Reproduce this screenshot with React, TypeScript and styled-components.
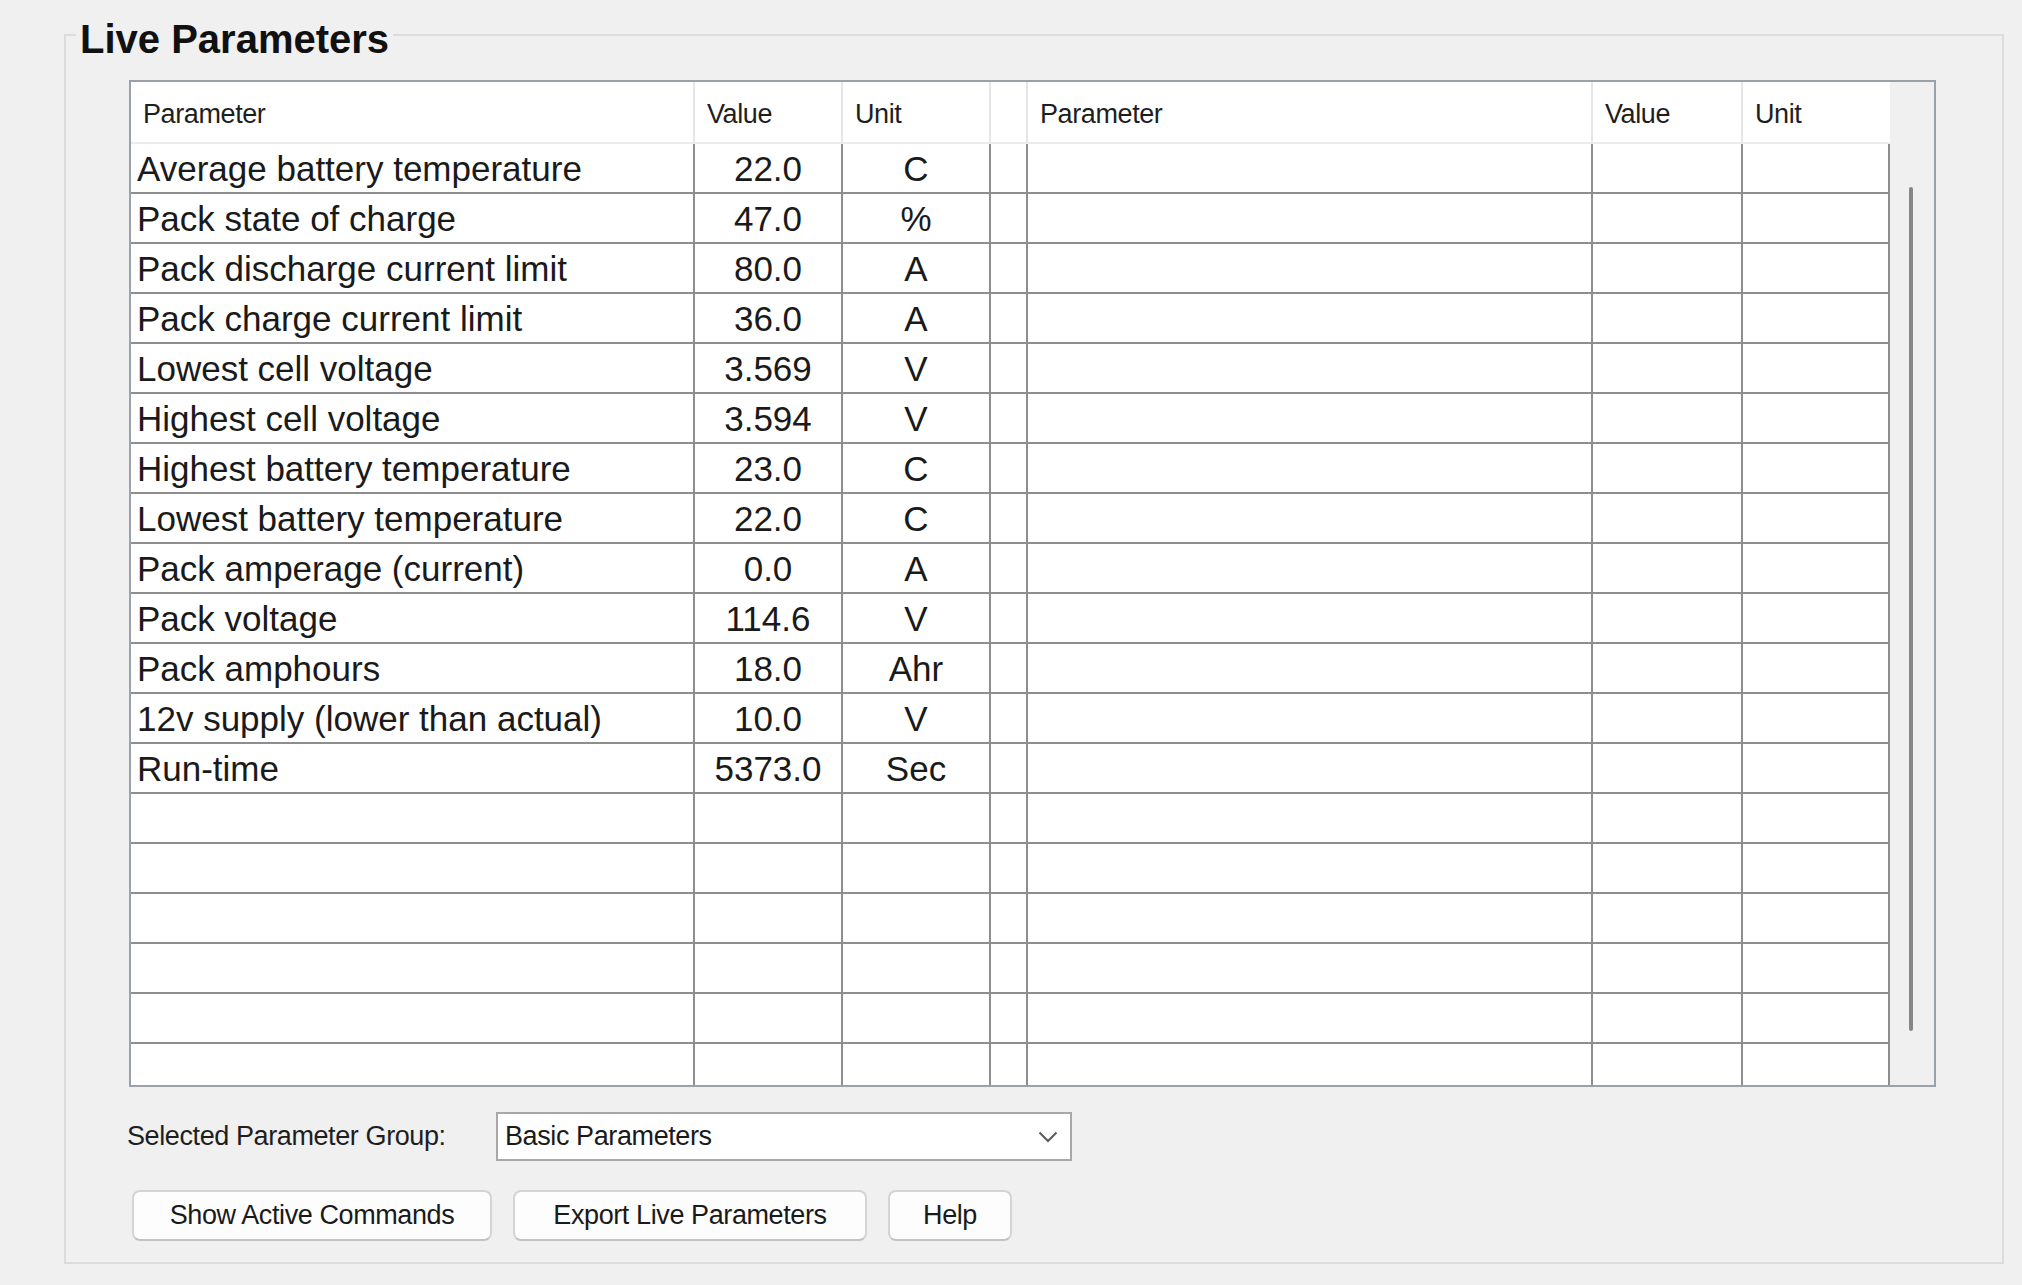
import React from "react";
import styled, { createGlobalStyle } from "styled-components";

const GlobalStyle = createGlobalStyle`
  html, body {
    margin: 0;
    padding: 0;
    background: #f0f0f0;
  }
  body {
    font-family: "Liberation Sans", Arial, sans-serif;
    color: #1a1a1a;
  }
  * { box-sizing: border-box; }
`;

const COLS = "564px 148px 148px 37px 565px 150px 147px";

const Page = styled.div`
  width: 2022px;
  height: 1285px;
  padding: 11px 18px 0 64px;
  background: #f0f0f0;
`;

const GroupBox = styled.fieldset`
  margin: 0;
  padding: 0;
  min-width: 0;
  border: 2px solid #dcdcdc;
`;

const Legend = styled.legend`
  margin-left: 10px;
  padding: 8px 4px 0;
  font-family: "Liberation Sans", Arial, sans-serif;
  font-weight: 700;
  font-size: 40px;
  line-height: 40px;
  color: #111;
`;

const Content = styled.div`
  padding: 21px 66px 21px 63px;
  display: flex;
  flex-direction: column;
`;

const ScrollPane = styled.div`
  display: flex;
  height: 1007px;
  border: 2px solid #9aa1ad;
  background: #f0f0f0;
`;

const TableArea = styled.div`
  width: 1759px;
  flex: none;
  display: flex;
  flex-direction: column;
  background: #fff;
`;

const HeaderRow = styled.div`
  display: grid;
  grid-template-columns: ${COLS};
  height: 62px;
  border-bottom: 2px solid #ececec;
  background: #fff;
`;

const HeaderCell = styled.div<{ $last?: boolean }>`
  display: flex;
  align-items: center;
  padding-left: 12px;
  padding-top: 4px;
  font-size: 27px;
  letter-spacing: -0.4px;
  color: #1e1e1e;
  border-right: ${(p) => (p.$last ? "none" : "2px solid #e6e6e6")};
  white-space: nowrap;
`;

const Body = styled.div`
  height: 941px;
  overflow: hidden;
`;

const Row = styled.div`
  display: grid;
  grid-template-columns: ${COLS};
  height: 50px;
`;

const Cell = styled.div<{ $align: "left" | "center" }>`
  display: flex;
  align-items: center;
  justify-content: ${(p) => (p.$align === "left" ? "flex-start" : "center")};
  padding-left: ${(p) => (p.$align === "left" ? "6px" : "0")};
  padding-top: 2px;
  font-size: 35px;
  color: #1a1a1a;
  white-space: nowrap;
  overflow: hidden;
  border-right: 2px solid #8e8e8e;
  border-bottom: 2px solid #8e8e8e;
`;

const ScrollStrip = styled.div`
  flex: 1;
  display: flex;
  justify-content: center;
  padding-top: 105px;
  padding-right: 2px;
  background: #f0f0f0;
`;

const Thumb = styled.div`
  width: 4px;
  height: 844px;
  border-radius: 2px;
  background: #878787;
`;

const ControlRow = styled.div`
  margin-top: 25px;
  display: flex;
  align-items: center;
`;

const Label = styled.div`
  width: 369px;
  margin-left: -2px;
  font-size: 27px;
  letter-spacing: -0.4px;
  color: #1e1e1e;
  white-space: nowrap;
`;

const Combo = styled.div`
  width: 576px;
  height: 49px;
  display: flex;
  align-items: center;
  justify-content: space-between;
  padding: 0 12px 0 7px;
  background: #fff;
  border: 2px solid #a8a8a8;
  font-size: 27px;
  letter-spacing: -0.4px;
  color: #1a1a1a;
`;

const ButtonRow = styled.div`
  margin-top: 29px;
  padding-left: 3px;
  display: flex;
  gap: 21px;
`;

const Button = styled.button<{ $w: number }>`
  width: ${(p) => p.$w}px;
  height: 51px;
  padding: 0;
  background: #fdfdfd;
  border: 2px solid #d4d4d4;
  border-bottom-color: #c2c2c2;
  border-radius: 8px;
  font-family: "Liberation Sans", Arial, sans-serif;
  font-size: 27px;
  letter-spacing: -0.4px;
  color: #1a1a1a;
  cursor: default;
`;

const rows: [string, string, string][] = [
  ["Average battery temperature", "22.0", "C"],
  ["Pack state of charge", "47.0", "%"],
  ["Pack discharge current limit", "80.0", "A"],
  ["Pack charge current limit", "36.0", "A"],
  ["Lowest cell voltage", "3.569", "V"],
  ["Highest cell voltage", "3.594", "V"],
  ["Highest battery temperature", "23.0", "C"],
  ["Lowest battery temperature", "22.0", "C"],
  ["Pack amperage (current)", "0.0", "A"],
  ["Pack voltage", "114.6", "V"],
  ["Pack amphours", "18.0", "Ahr"],
  ["12v supply (lower than actual)", "10.0", "V"],
  ["Run-time", "5373.0", "Sec"],
];

const TOTAL_ROWS = 20;

const headers = ["Parameter", "Value", "Unit", "", "Parameter", "Value", "Unit"];

export default function App() {
  const allRows = Array.from({ length: TOTAL_ROWS }, (_, i) => rows[i] ?? ["", "", ""]);
  return (
    <>
      <GlobalStyle />
      <Page>
        <GroupBox>
          <Legend>Live Parameters</Legend>
          <Content>
            <ScrollPane>
              <TableArea>
                <HeaderRow>
                  {headers.map((h, i) => (
                    <HeaderCell key={i} $last={i === headers.length - 1}>
                      {h}
                    </HeaderCell>
                  ))}
                </HeaderRow>
                <Body>
                  {allRows.map((r, i) => (
                    <Row key={i}>
                      <Cell $align="left">{r[0]}</Cell>
                      <Cell $align="center">{r[1]}</Cell>
                      <Cell $align="center">{r[2]}</Cell>
                      <Cell $align="center" />
                      <Cell $align="left" />
                      <Cell $align="center" />
                      <Cell $align="center" />
                    </Row>
                  ))}
                </Body>
              </TableArea>
              <ScrollStrip>
                <Thumb />
              </ScrollStrip>
            </ScrollPane>
            <ControlRow>
              <Label>Selected Parameter Group:</Label>
              <Combo>
                <span>Basic Parameters</span>
                <svg width="20" height="12" viewBox="0 0 20 12">
                  <path d="M1.5 1.5 L10 10 L18.5 1.5" fill="none" stroke="#5a5a5a" strokeWidth="2" />
                </svg>
              </Combo>
            </ControlRow>
            <ButtonRow>
              <Button $w={360}>Show Active Commands</Button>
              <Button $w={354}>Export Live Parameters</Button>
              <Button $w={124}>Help</Button>
            </ButtonRow>
          </Content>
        </GroupBox>
      </Page>
    </>
  );
}
